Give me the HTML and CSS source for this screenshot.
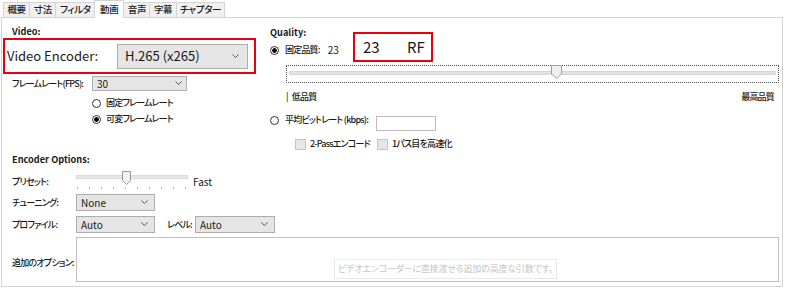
FILE: index.html
```html
<!DOCTYPE html>
<html lang="ja">
<head>
<meta charset="utf-8">
<title>動画</title>
<link rel="stylesheet" href="styles.css">
</head>
<body>
<div class="tabs">
  <div class="tab">概要</div>
  <div class="tab">寸法</div>
  <div class="tab">フィルタ</div>
  <div class="tab active">動画</div>
  <div class="tab">音声</div>
  <div class="tab">字幕</div>
  <div class="tab">チャプター</div>
</div>
<div class="panel">
  <div class="top">
    <div class="col-video">
      <div class="title">Video:</div>
      <div class="callout encoder">
        <span class="big-label">Video Encoder:</span>
        <div class="select big"><span>H.265 (x265)</span><svg class="chev" width="7" height="5" viewBox="0 0 7 5"><path d="M0.5 0.5 L3.5 3.5 L6.5 0.5" fill="none" stroke="#555" stroke-width="1"/></svg></div>
      </div>
      <div class="fps-row">
        <span class="label ja">フレームレート(FPS):</span>
        <div class="select fps"><span>30</span><svg class="chev" width="7" height="5" viewBox="0 0 7 5"><path d="M0.5 0.5 L3.5 3.5 L6.5 0.5" fill="none" stroke="#555" stroke-width="1"/></svg></div>
      </div>
      <div class="radio-list">
        <div class="radio-row"><span class="radio"></span><span class="ja">固定フレームレート</span></div>
        <div class="radio-row"><span class="radio on"></span><span class="ja">可変フレームレート</span></div>
      </div>
    </div>
    <div class="col-quality">
      <div class="title">Quality:</div>
      <div class="rf-row">
        <div class="radio-row rf-radio"><span class="radio on"></span><span class="ja">固定品質:</span><span class="rf-val">23</span></div>
        <div class="callout rf"><span>23</span><span>RF</span></div>
      </div>
      <div class="q-slider">
        <div class="track"></div>
        <svg class="thumb" style="left:53.7%" width="11" height="14" viewBox="0 0 11 14"><path d="M0.5 0.5 H10.5 V9 L5.5 13.5 L0.5 9 Z" fill="#eeeeee" stroke="#a0a0a0" stroke-width="1"/></svg>
      </div>
      <div class="q-labels ja"><span><span class="bar">|</span>低品質</span><span>最高品質</span></div>
      <div class="bitrate-row">
        <div class="radio-row"><span class="radio"></span><span class="ja">平均ビットレート (kbps):</span></div>
        <div class="input"></div>
      </div>
      <div class="check-row">
        <div class="check-item"><span class="check"></span><span class="ja">2-Passエンコード</span></div>
        <div class="check-item"><span class="check"></span><span class="ja">1パス目を高速化</span></div>
      </div>
    </div>
  </div>
  <div class="enc">
    <div class="title">Encoder Options:</div>
    <div class="row preset-row">
      <span class="label ja">プリセット:</span>
      <div class="p-slider">
        <div class="track"></div>
        <svg class="thumb" style="left:41%" width="9" height="14" viewBox="0 0 9 14"><path d="M0.5 0.5 H8.5 V9.5 L4.5 13.5 L0.5 9.5 Z" fill="#f2f2f2" stroke="#9a9a9a" stroke-width="1"/></svg>
        <div class="ticks"><i></i><i></i><i></i><i></i><i></i><i></i><i></i><i></i><i></i><i></i></div>
      </div>
      <span class="fast">Fast</span>
    </div>
    <div class="row tune-row">
      <span class="label ja">チューニング:</span>
      <div class="select sm"><span>None</span><svg class="chev" width="7" height="5" viewBox="0 0 7 5"><path d="M0.5 0.5 L3.5 3.5 L6.5 0.5" fill="none" stroke="#555" stroke-width="1"/></svg></div>
    </div>
    <div class="row profile-row">
      <span class="label ja">プロファイル:</span>
      <div class="select sm"><span>Auto</span><svg class="chev" width="7" height="5" viewBox="0 0 7 5"><path d="M0.5 0.5 L3.5 3.5 L6.5 0.5" fill="none" stroke="#555" stroke-width="1"/></svg></div>
      <span class="level-label ja">レベル:</span>
      <div class="select sm level"><span>Auto</span><svg class="chev" width="7" height="5" viewBox="0 0 7 5"><path d="M0.5 0.5 L3.5 3.5 L6.5 0.5" fill="none" stroke="#555" stroke-width="1"/></svg></div>
    </div>
    <div class="row opt-row">
      <span class="label ja opt-label">追加のオプション:</span>
      <div class="textarea"><div class="placeholder">ビデオエンコーダーに直接渡せる追加の高度な引数です。</div></div>
    </div>
  </div>
</div>
</body>
</html>
```

FILE: styles.css
```css
* { box-sizing: border-box; }
html, body { margin: 0; padding: 0; }
body {
  width: 790px;
  height: 288px;
  overflow: hidden;
  background: #ffffff;
  font-family: "Noto Sans CJK JP", sans-serif;
  font-size: 10px;
  line-height: 12px;
  color: #1a1a1a;
  font-feature-settings: "palt";
}
.ja {
  font-size: 9px;
  letter-spacing: -0.8px;
  font-weight: 500;
}

/* tabs */
.tabs {
  display: flex;
  align-items: flex-end;
  height: 17px;
  padding-left: 3px;
  position: relative;
  z-index: 1;
}
.tab {
  height: 15px;
  padding: 0 3.5px;
  border: 1px solid #d4d4d4;
  border-bottom: none;
  background: #f0f0f0;
  margin-right: -1px;
  line-height: 13px;
  font-size: 9.5px;
  letter-spacing: -0.4px;
  font-weight: 500;
  white-space: nowrap;
}
.tab.active {
  height: 18px;
  margin-bottom: -1px;
  background: #ffffff;
  line-height: 16px;
  padding: 0 5px;
}

/* panel */
.panel {
  margin-left: 1px;
  width: 782px;
  height: 270px;
  border: 1px solid #d4d4d4;
}
.top {
  display: grid;
  grid-template-columns: 268px 1fr;
}
.title { font-weight: 700; font-size: 9.2px; line-height: 12px; white-space: nowrap; }
.label { white-space: nowrap; flex: none; }

.callout { border: 2px solid #e8000b; }

/* video column */
.col-video .title { margin: 7px 0 0 10px; }
.encoder {
  margin: 1px 0 0 1px;
  width: 253px;
  height: 36px;
  display: flex;
  align-items: center;
  padding-left: 2px;
}
.big-label { font-size: 13px; width: 110px; white-space: nowrap; flex: none; }

.select {
  display: flex;
  align-items: center;
  justify-content: space-between;
  background: #e5e5e5;
  border: 1px solid #adadad;
  padding: 0 6px;
  white-space: nowrap;
  flex: none;
}
.select.big {
  width: 131px;
  height: 25px;
  font-size: 13px;
  padding: 0 8px 0 7px;
}
.fps-row {
  margin-top: 2px;
  display: flex;
  align-items: center;
  padding-left: 10px;
}
.fps-row .label { width: 80px; }
.select.fps { width: 95px; height: 15px; padding: 0 4px 0 4px; }

.radio-list { margin-top: 4px; padding-left: 90px; }
.radio-row {
  display: flex;
  align-items: center;
  gap: 5px;
  height: 16px;
  white-space: nowrap;
}
.radio {
  width: 9px;
  height: 9px;
  border: 1px solid #333;
  border-radius: 50%;
  background: #fff;
  flex: none;
}
.radio.on { background: radial-gradient(circle, #000 0 2px, #fff 2.6px); }

/* quality column */
.col-quality .title { margin-top: 8px; }
.rf-row {
  margin-top: -6px;
  display: grid;
  grid-template-columns: 83px 80px;
  align-items: center;
  height: 30px;
}
.rf-radio { gap: 6px; margin-top: 6px; }
.rf-val { margin-left: 2px; }
.callout.rf {
  height: 30px;
  display: grid;
  grid-template-columns: 44px auto;
  align-items: center;
  padding-left: 8px;
  font-size: 15px;
  line-height: 16px;
}

.q-slider {
  position: relative;
  margin: 3px 3px 0 16px;
  height: 18px;
  border: 1px dotted #555;
}
.q-slider .track {
  margin: 5px 2px 0 2px;
  height: 4px;
  background: #e3e3e3;
  border: 1px solid #d6d6d6;
  border-radius: 1px;
}
.thumb { position: absolute; top: -1px; }

.q-labels {
  margin-top: 8px;
  display: flex;
  justify-content: space-between;
  padding: 0 8px 0 16px;
}
.bar { margin-right: 4px; }

.bitrate-row {
  margin-top: 11px;
  display: grid;
  grid-template-columns: 106px 60px;
  align-items: start;
}
.bitrate-row .radio-row { height: 12px; gap: 6px; }
.input {
  margin-top: 2px;
  width: 60px;
  height: 15px;
  border: 1px solid #bcbcbc;
  background: #fff;
}

.check-row {
  margin-top: 7px;
  padding-left: 25px;
  display: grid;
  grid-template-columns: 82px auto;
  height: 11px;
}
.check-item { display: flex; align-items: center; gap: 4px; white-space: nowrap; }
.check {
  width: 11px;
  height: 11px;
  background: #e6e6e6;
  border: 1px solid #c4c4c4;
  flex: none;
}

/* encoder options */
.enc { padding-left: 10px; }
.enc .title { margin-top: 4px; }
.row { display: flex; align-items: center; }
.row .label { width: 64px; }
.preset-row { margin-top: 5px; height: 20px; }
.preset-row .label { margin-top: 3px; }
.p-slider { position: relative; width: 112px; height: 20px; flex: none; }
.p-slider .track {
  margin-top: 5px;
  height: 4px;
  background: #e6e6e6;
  border: 1px solid #dadada;
}
.p-slider .thumb { top: 1px; }
.ticks {
  margin-top: 8px;
  display: flex;
  justify-content: space-between;
  padding: 0 2px 0 1px;
}
.ticks i { width: 1px; height: 2px; background: #b5b5b5; }
.fast { margin-left: 5px; margin-top: 3px; }

.tune-row { margin-top: 4px; }
.profile-row { margin-top: 5px; }
.select.sm { width: 79px; height: 17px; padding: 0 6px 0 4px; }
.level-label { margin-left: 12px; width: 28px; white-space: nowrap; flex: none; }
.select.level { width: 80px; }

.opt-row { margin-top: 4px; }
.opt-label { margin-top: 7px; }
.textarea {
  width: 703px;
  height: 45px;
  border: 1px solid #bfbfbf;
  display: flex;
  align-items: flex-end;
  padding: 0 0 2px 257px;
  flex: none;
}
.placeholder {
  width: 223px;
  height: 20px;
  border: 1px solid #e8e8e8;
  color: #c6c6c6;
  font-size: 9px;
  letter-spacing: -0.2px;
  line-height: 18px;
  text-align: center;
  white-space: nowrap;
}
```
